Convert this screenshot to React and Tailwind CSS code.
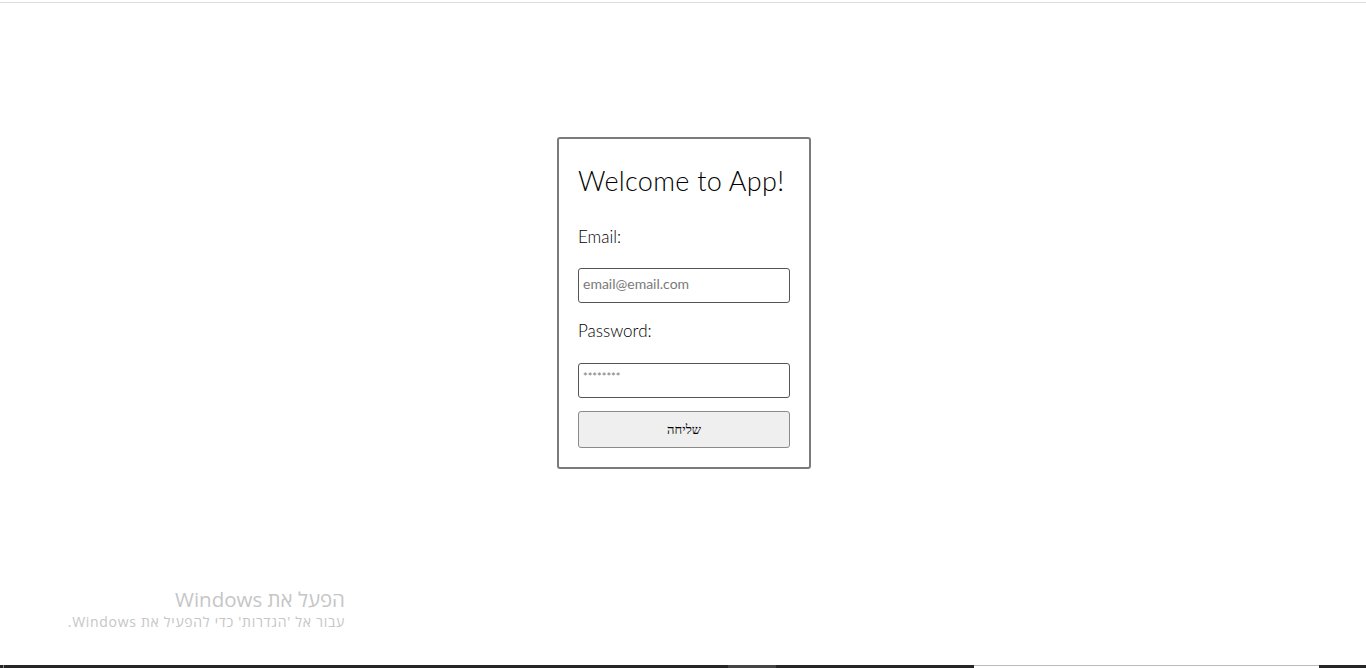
export default function App() {
  return (
    <div className="relative h-[668px] w-full overflow-hidden bg-white">
      <div className="h-[2px]" />
      <div className="h-px bg-[#dcdcdc]" />
      <div className="flex justify-center pt-[134px]">
        <div className="ml-[2px] flex w-[254px] flex-col rounded-[3px] border-2 border-[#7b7b7b] px-[19px] pt-[22px] pb-[19px] font-['Lato',sans-serif] font-light text-black">
          <h1 className="text-[27px] leading-[40px] tracking-[0.3px]">Welcome to App!</h1>
          <label className="mt-[24px] text-[17px] leading-[24px]">Email:</label>
          <input
            className="mt-[19px] h-[35px] rounded-[3px] border border-[#555] px-[4px] pb-[4px] text-[14px] font-normal placeholder:text-[#7a7a7a] outline-none"
            placeholder="email@email.com"
          />
          <label className="mt-[16px] text-[17px] leading-[24px]">Password:</label>
          <input
            type="password"
            className="mt-[20px] h-[35px] rounded-[3px] border border-[#555] px-[4px] pb-[8px] text-[11px] font-normal placeholder:text-[#7a7a7a] outline-none"
            placeholder="********"
          />
          <button className="mt-[13px] h-[37px] rounded-[3px] border border-[#8a8a8a] bg-[#efefef] font-['Liberation_Serif',serif] text-[13px] font-normal text-black">
            שליחה
          </button>
        </div>
      </div>
      <div dir="rtl" className="absolute left-0 top-[586px] w-[345px] font-['Open_Sans','Liberation_Sans',sans-serif] text-[#c6c6c6]">
        <div className="text-[20.5px] leading-[26px]">הפעל את Windows</div>
        <div className="text-[14px] leading-[20px] tracking-[0.7px]">עבור אל 'הגדרות' כדי להפעיל את Windows.</div>
      </div>
      <div className="absolute bottom-0 left-0 flex h-[3px] w-full">
        <div className="w-[3px] bg-[#262626]" />
        <div className="w-px bg-[#888]" />
        <div className="w-[724px] bg-[#262626]" />
        <div className="w-[48px] bg-[#444]" />
        <div className="w-[198px] bg-[#262626]" />
        <div className="w-[345px] border-t border-[#bbb] bg-white" />
        <div className="flex-1 bg-[#262626]" />
      </div>
    </div>
  );
}
